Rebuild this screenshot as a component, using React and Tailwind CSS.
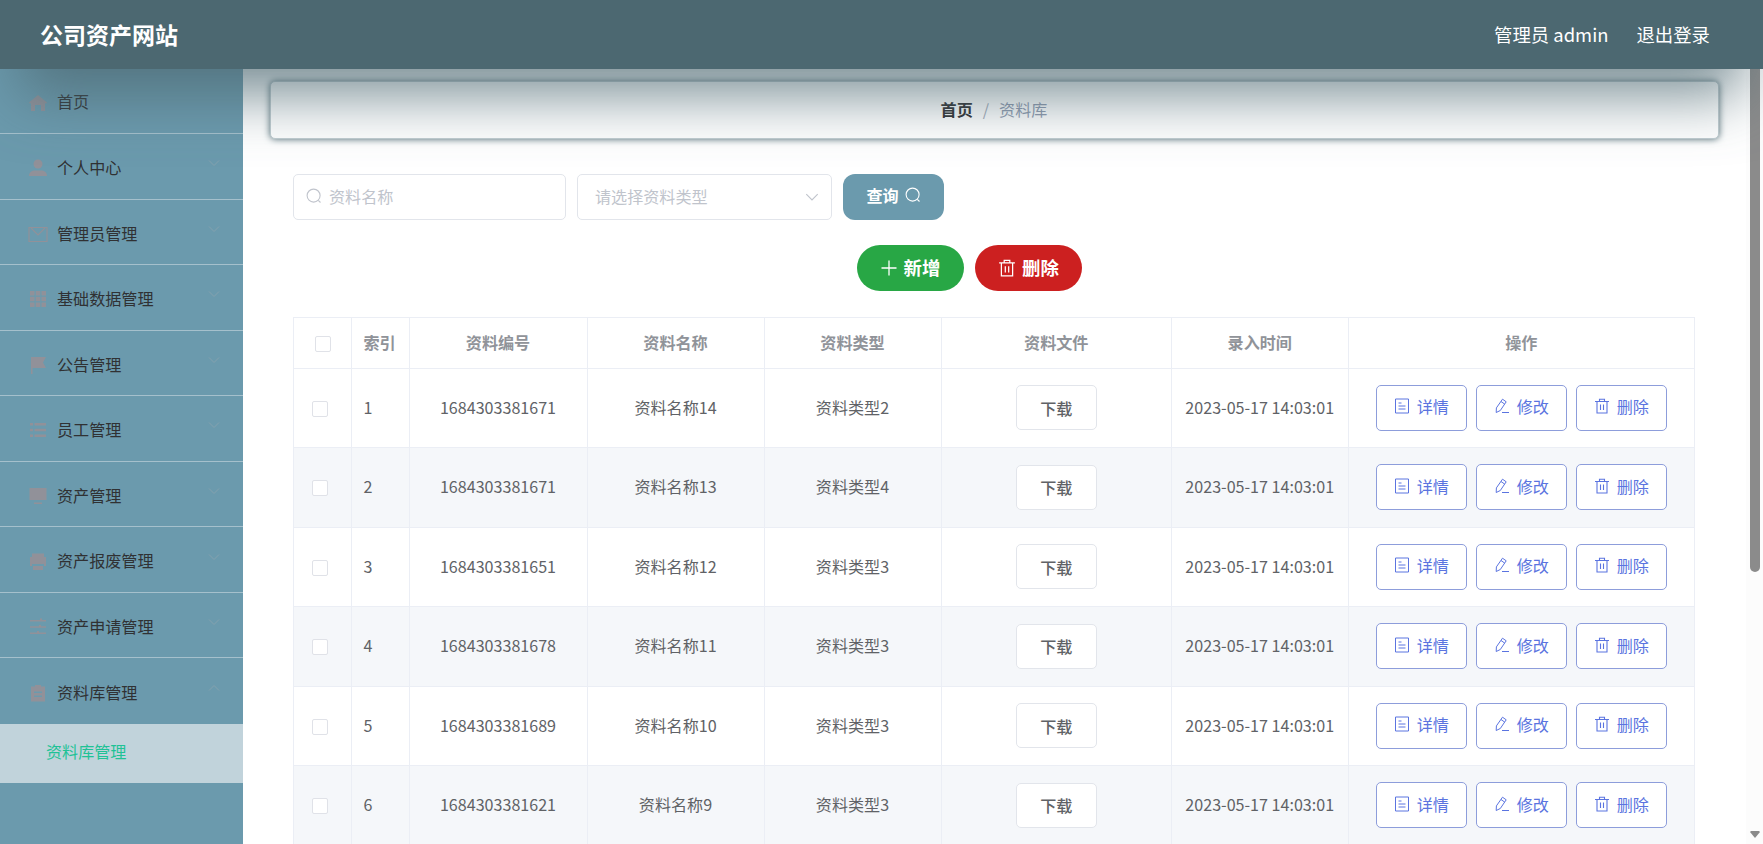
import React from "react";

const menus = [
  { name: "首页", icon: "home" },
  { name: "个人中心", icon: "user", arrow: true },
  { name: "管理员管理", icon: "message", arrow: true },
  { name: "基础数据管理", icon: "grid", arrow: true },
  { name: "公告管理", icon: "flag", arrow: true },
  { name: "员工管理", icon: "list", arrow: true },
  { name: "资产管理", icon: "monitor", arrow: true },
  { name: "资产报废管理", icon: "printer", arrow: true },
  { name: "资产申请管理", icon: "sliders", arrow: true },
  { name: "资料库管理", icon: "order", arrow: true, open: true },
];

const rows = [
  { id: 1, code: "1684303381671", name: "资料名称14", type: "资料类型2" },
  { id: 2, code: "1684303381671", name: "资料名称13", type: "资料类型4" },
  { id: 3, code: "1684303381651", name: "资料名称12", type: "资料类型3" },
  { id: 4, code: "1684303381678", name: "资料名称11", type: "资料类型3" },
  { id: 5, code: "1684303381689", name: "资料名称10", type: "资料类型3" },
  { id: 6, code: "1684303381621", name: "资料名称9", type: "资料类型3" },
];

const menuIcons = {
  home: <path d="M10 2 1 9.500l1 1.200 1-.8V18h4v-6h6v6h4V9.900l1 .8 1-1.200z" />,
  user: (
    <>
      <circle cx="10" cy="6" r="4.500" />
      <path d="M1 18c0-4 3-5.500 6-5.500h6c3 0 6 1.500 6 5.500z" />
    </>
  ),
  message: (
    <path d="M1 3.500h18v14H1zM3 4l7 7 7-7" fill="none" stroke="currentColor" strokeWidth="1.200" />
  ),
  grid: (
    <path d="M2 2h4.500v4.500H2zM7.700 2h4.600v4.500H7.700zM13.500 2H18v4.500h-4.500zM2 7.700h4.500v4.600H2zM7.700 7.700h4.600v4.600H7.700zM13.500 7.700H18v4.600h-4.500zM2 13.500h4.500V18H2zM7.700 13.500h4.600V18H7.700zM13.500 13.500H18V18h-4.500z" />
  ),
  flag: <path d="M3 2h15l-3 5.500 3 5.500H4.500v6H3z" />,
  list: (
    <path d="M2 3h3v2.500H2zM6.500 3H18v2.500H6.500zM2 8.700h3v2.500H2zM6.500 8.700H18v2.500H6.500zM2 14.500h3V17H2zM6.500 14.500H18V17H6.500z" />
  ),
  monitor: <path d="M1.500 2h17v12h-17zM6 16.500h8V18H6z" />,
  printer: <path d="M4 1.500h12V5H4zM2 5h16v9h-2v-2H4v2H2zM5 14h10v4H5z" />,
  sliders: (
    <path d="M2 3h10V1.500h2V3h4v1.500H2zM2 9.300h9V8h2v1.300h5v1.500H2zM2 15.500h7V14h2v1.500h7V17H2z" />
  ),
  order: (
    <path
      d="M3 3.500h4V2h6v1.500h4v15H3zM6 8.500V10h8V8.500zM6 12.500V14h8v-1.500z"
      fillRule="evenodd"
    />
  ),
};

const SearchIcon = ({ className }) => (
  <svg viewBox="0 0 16 16" className={className} fill="none" stroke="currentColor" strokeWidth="1.100">
    <circle cx="7.600" cy="7.600" r="6.500" />
    <path d="m12.300 12.300 2.200 2.200" />
  </svg>
);

const TrashIcon = ({ className }) => (
  <svg viewBox="0 0 16 16" className={className} fill="none" stroke="currentColor" strokeWidth="1.100">
    <path d="M1 3.500h14M3 3.500V15h10V3.500M5.500 3.500V1.200h5v2.300M6.500 6.500V12M9.500 6.500V12" />
  </svg>
);

const DetailIcon = ({ className }) => (
  <svg viewBox="0 0 16 16" className={className} fill="none" stroke="currentColor">
    <path d="M1.500 1h13v14h-13zM4.500 5h3M4.500 8h7M4.500 11h7" />
  </svg>
);

const EditIcon = ({ className }) => (
  <svg viewBox="0 0 16 16" className={className} fill="none" stroke="currentColor">
    <path
      d="m8.500 1.200 3.700 2.600-5.900 8.700-4.100 2 .2-4.600zM7 3.500l3.700 2.600M8 14.500h7"
      strokeLinejoin="round"
    />
  </svg>
);

const Chevron = ({ className }) => (
  <svg viewBox="0 0 14 14" className={className} fill="none" stroke="currentColor">
    <path d="m2 4.500 5 5 5-5" />
  </svg>
);

const ActionButton = ({ icon: Icon, children }) => (
  <button className="flex h-[46px] w-[91px] items-center justify-center gap-[7px] rounded-[5px] border border-[#8d9ddb] bg-white pb-[3px] text-[#5b74e0]">
    <Icon className="h-4 w-4" />
    {children}
  </button>
);

const Checkbox = () => (
  <span className="block h-4 w-4 rounded-xs border border-[#e0e2e8] bg-white"></span>
);

const Header = () => (
  <header className="relative z-10 h-[69px] shrink-0">
    {/* soft shadow that falls over the page */}
    <div className="pointer-events-none absolute inset-x-5 top-[-200px] h-[135px] shadow-[0_160px_60px_rgba(76,104,113,0.76)]"></div>
    <div className="relative flex h-full items-center justify-between bg-[#4c6871] pr-[53px] pl-10 text-white">
      <h1 className="text-[23px] font-bold">公司资产网站</h1>
      <div className="flex gap-7 pt-px text-[18.400px]">
        <span>管理员 admin</span>
        <span>退出登录</span>
      </div>
    </div>
  </header>
);

const Sidebar = () => (
  <aside className="w-[243px] shrink-0 bg-[#6b9aad] text-[#303133]">
    {menus.map((menu) => (
      <div
        key={menu.name}
        className={`flex h-[65.550px] items-center pt-0.5 pr-[22px] pl-7 first:h-[65px] first:pt-px ${
          menu.open ? "" : "border-b border-[#a5c0cc]"
        }`}
      >
        <svg
          viewBox="0 0 20 20"
          className="mt-0.5 mr-[9px] h-5 w-5 text-[#919199]"
          fill="currentColor"
        >
          {menuIcons[menu.icon]}
        </svg>
        <span className="flex-1">{menu.name}</span>
        {menu.arrow && (
          <Chevron
            className={`mb-2 h-3.5 w-3.5 text-[#84a2af] ${menu.open ? "rotate-180" : ""}`}
          />
        )}
      </div>
    ))}
    <div className="flex h-[59px] items-center bg-[#c1d3db] pb-1 pl-[46px] text-[#1fc296]">
      资料库管理
    </div>
  </aside>
);

const Breadcrumb = () => (
  <div className="mx-[27px] mt-3 flex h-[58px] items-center justify-center rounded-[5px] border border-[#c0ccd0] bg-white pr-px pb-0.5 shadow-[0_0_7px_#4c6871]">
    <span className="font-bold text-[#303133]">首页</span>
    <span className="mx-[10px] text-[#a5aebb]">/</span>
    <span className="text-[#8f9bb0]">资料库</span>
  </div>
);

const SearchForm = () => (
  <div className="flex">
    <div className="flex h-[46px] w-[273px] items-center gap-[7px] rounded-[5px] border border-[#e2e5eb] bg-white pb-0.5 pl-3 text-[#c0c4cc]">
      <SearchIcon className="h-4 w-4" />
      资料名称
    </div>
    <div className="ml-[11px] flex h-[46px] w-[255px] items-center justify-between rounded-[5px] border border-[#e2e5eb] bg-white pr-[11px] pb-0.5 pl-[17px] text-[#c0c4cc]">
      请选择资料类型
      <Chevron className="mt-0.5 h-4 w-4" />
    </div>
    <button className="ml-[11px] flex h-[46px] w-[101px] items-center justify-center gap-1.5 rounded-xl bg-[#6b9aad] pb-1 font-bold text-white">
      查询
      <SearchIcon className="h-4 w-4" />
    </button>
  </div>
);

const th = "border-r border-b border-[#ebeef5] pb-0.5 font-bold";
const td = "border-r border-b border-[#ebeef5]";

const DataTable = () => (
  <table className="w-[1402px] table-fixed border-separate border-spacing-0 border-t border-l border-[#ebeef5] text-center text-[#606266]">
    <colgroup>
      <col className="w-[57.500px]" />
      <col className="w-[58px]" />
      <col className="w-[178px]" />
      <col className="w-[177px]" />
      <col className="w-[177px]" />
      <col className="w-[230.500px]" />
      <col className="w-[176.500px]" />
      <col />
    </colgroup>
    <thead className="text-[#909399]">
      <tr className="h-[50.500px]">
        <th className={th}>
          <div className="flex pt-1 pl-[21px]">
            <Checkbox />
          </div>
        </th>
        <th className={`${th} pl-3 text-left`}>索引</th>
        <th className={th}>资料编号</th>
        <th className={th}>资料名称</th>
        <th className={th}>资料类型</th>
        <th className={th}>资料文件</th>
        <th className={th}>录入时间</th>
        <th className={th}>操作</th>
      </tr>
    </thead>
    <tbody>
      {rows.map((row) => (
        <tr key={row.id} className="h-[79.500px] even:bg-[#f5f7fa]">
          <td className={td}>
            <div className="flex pt-0.5 pl-[18px]">
              <Checkbox />
            </div>
          </td>
          <td className={`${td} pb-0.5 pl-3 text-left`}>{row.id}</td>
          <td className={`${td} pb-0.5`}>{row.code}</td>
          <td className={`${td} pb-0.5`}>{row.name}</td>
          <td className={`${td} pb-0.5`}>{row.type}</td>
          <td className={td}>
            <button className="h-[45px] w-[81px] rounded-[5px] border border-[#e2e5eb] bg-white font-medium">
              下载
            </button>
          </td>
          <td className={`${td} pb-0.5`}>2023-05-17 14:03:01</td>
          <td className={td}>
            <div className="flex justify-center gap-[9px]">
              <ActionButton icon={DetailIcon}>详情</ActionButton>
              <ActionButton icon={EditIcon}>修改</ActionButton>
              <ActionButton icon={TrashIcon}>删除</ActionButton>
            </div>
          </td>
        </tr>
      ))}
    </tbody>
  </table>
);

const App = () => {
  return (
    <div className="flex h-[844px] w-[1763px] flex-col overflow-hidden bg-white font-['Noto_Sans_CJK_SC',sans-serif] text-[16.100px] leading-normal">
      <Header />
      <div className="flex min-h-0 flex-1">
        <Sidebar />
        <main className="min-w-0 flex-1 overflow-hidden">
          <Breadcrumb />
          <div className="pt-[35px] pl-[50px]">
            <SearchForm />
            <div className="mt-[25px] flex gap-[11px] pl-[564px] text-[18.400px] font-bold text-white">
              <button className="flex h-[46px] w-[107px] items-center justify-center gap-[7px] rounded-[23px] bg-[#28a745] pb-px">
                <svg viewBox="0 0 16 16" className="h-4 w-4" fill="none" stroke="currentColor" strokeWidth="1.300">
                  <path d="M8 .5v15M.5 8h15" />
                </svg>
                新增
              </button>
              <button className="flex h-[46px] w-[107px] items-center justify-center gap-1.5 rounded-[23px] bg-[#cc2020] pb-px">
                <TrashIcon className="h-[18px] w-[18px]" />
                删除
              </button>
            </div>
            <div className="mt-[26px]">
              <DataTable />
            </div>
          </div>
        </main>
        {/* scrollbar */}
        <div className="flex w-[17px] shrink-0 flex-col items-center justify-between bg-[#fcfcfc] pb-1.5">
          <div className="h-[503px] w-2.5 rounded-b-full bg-[#8b8b8b]"></div>
          <svg viewBox="0 0 10 7" className="h-[7px] w-2.5" fill="#8b8b8b">
            <path d="M1 0h8l1 1-5 6-5-6z" />
          </svg>
        </div>
      </div>
    </div>
  );
};

export default App;
